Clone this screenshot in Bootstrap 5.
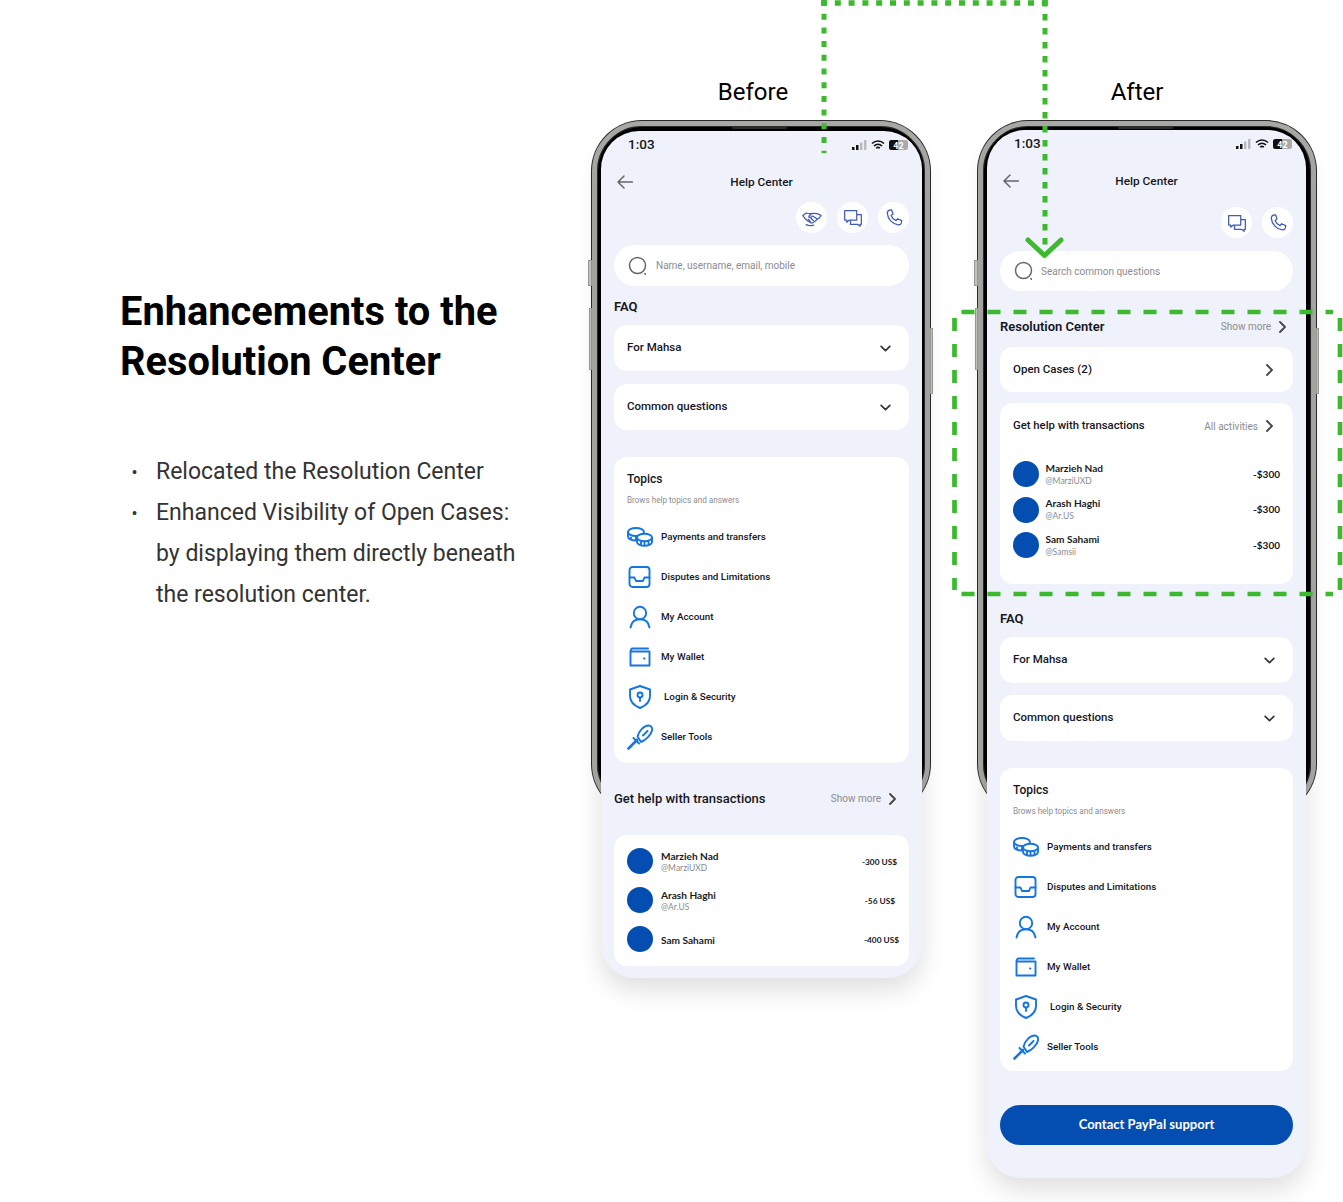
<!DOCTYPE html>
<html lang="en">
<head>
    <meta charset="UTF-8">
    <title>Enhancements to the Resolution Center</title>
    <link href="https://cdn.jsdelivr.net/npm/bootstrap@5.3.3/dist/css/bootstrap.min.css" rel="stylesheet">
    <style>
        body { background: #fff; font-family: Roboto, "Liberation Sans", sans-serif; }
        .sheet { width: 1343px; height: 1202px; overflow: hidden; }
        .intro { width: 591px; padding: 287px 0 0 120px; flex: none; }
        .intro h1 { font-size: 39.800px; line-height: 50px; font-weight: 700; color: #000; margin: 0; }
        .intro ul { margin: 64px 0 0; padding-left: 36px; font-size: 23px; line-height: 41px; font-weight: 400; color: #333; }
        .intro li::marker { content: "•\2003"; font-size: 18px; }
        .phone-col { width: 340px; flex: none; padding-top: 77px; }
        .phone-col.after-col { margin-left: 46px; }
        .phone-label { font-size: 24px; line-height: 30px; height: 43px; text-align: center; color: #000; padding-right: 16px; }
        .after-col .phone-label { padding-right: 20px; }
        .phone { position: relative; padding: 11px 9px 0 10px; }
        .after-col .phone { padding: 10px 11px 0 10px; }
        .frame { position: absolute; left: 1px; top: 1px; width: 338px; height: 693px; background: #000; border: 5px solid #a9aaa5; border-radius: 50px; box-shadow: 0 0 0 1px #2b2b2b, inset 0 0 0 1px #2b2b2b; }
        .frame::before { content: ""; position: absolute; left: 135px; top: 0; width: 55px; height: 3px; border-radius: 2px; background: #2c2c2c; }
        .side-btn { position: absolute; background: #c6c7c2; border: 1px solid #9a9a96; }
        .sb-1 { left: -3px; top: 140px; width: 4px; height: 26px; }
        .sb-2 { left: -2px; top: 188px; width: 3px; height: 62px; }
        .sb-3 { right: -2px; top: 208px; width: 3px; height: 66px; }
        .screen { position: relative; background: #eff2fa; border-radius: 38px 38px 34px 34px; box-shadow: 0 12px 26px rgba(0, 0, 0, .13); color: #16161e; }
        .status-row { height: 33px; padding: 4px 14px 0 27px; font-size: 13.500px; line-height: 18px; font-weight: 500; }
        .nav-row { height: 36px; padding: 0 16px; }
        .nav-row svg { width: 16px; height: 14px; stroke: #666; flex: none; }
        .nav-title { font-size: 11.800px; font-weight: 500; text-align: center; flex: 1 1 auto; padding: 1px 16px 0 0; }
        .act-row { padding: 0 13px; gap: 10px; margin-top: 2px; }
        .after-col .act-row { margin-top: 8px; }
        .act-btn { width: 31px; height: 31px; border-radius: 50%; background: #fff; }
        .act-btn svg { width: 20px; height: 20px; stroke: #4259b5; }
        .body-pad { padding: 0 13px; }
        .search-box { height: 41px; margin-top: 12px; background: #fff; border-radius: 21px; padding-left: 14px; gap: 8px; font-size: 10px; color: #8b8b8f; }
        .after-col .search-box { height: 40px; margin-top: 13px; gap: 7px; }
        .search-box svg { width: 20px; height: 20px; stroke: #666; }
        .sec-title { font-size: 13px; line-height: 18px; font-weight: 600; }
        .faq-title { margin-top: 12px; }
        .after-col .faq-title { margin-top: 26px; }
        .fold-row { height: 46px; margin-top: 13px; padding: 0 18px 0 13px; border-radius: 13px; font-size: 11.500px; font-weight: 500; }
        .fold-row.first { margin-top: 9px; }
        .after-col .fold-row { margin-top: 12px; }
        .after-col .fold-row.first { margin-top: 9px; }
        .fold-row svg { width: 11px; height: 7px; stroke: #333; stroke-width: 1.900; }
        .topic-card { margin-top: 27px; padding: 13px 0 6px 13px; border-radius: 13px; }
        .after-col .topic-card { padding-bottom: 4px; }
        .topic-head { font-size: 12px; line-height: 18px; font-weight: 500; }
        .topic-sub { font-size: 8.150px; line-height: 12px; margin: 6px 0 11px; color: #8b8b8f; }
        .after-col .topic-sub { margin-bottom: 10px; }
        .topic-row { height: 40px; gap: 8px; font-size: 9.850px; font-weight: 500; }
        .topic-row svg { width: 26px; height: 26px; stroke: #1575e2; stroke-width: 1.900; flex: none; }
        .topic-row .shift { margin-left: 3px; }
        .more-link { font-size: 10px; font-weight: 400; color: #8b8b8f; gap: 8px; }
        .more-link svg, .open-row svg { width: 7px; height: 12px; stroke: #444; stroke-width: 1.800; }
        .help-head { margin-top: 27px; padding-right: 13px; font-weight: 500; }
        .res-head { margin-top: 27px; padding-right: 7px; }
        .open-row { height: 45px; margin-top: 11px; padding: 0 20px 0 13px; border-radius: 13px; font-size: 11.500px; font-weight: 500; }
        .help-card { margin-top: 27px; padding: 13px 10px 14px 13px; border-radius: 13px; }
        .help-card.wide { margin-top: 11px; padding: 14px 13px 26px; }
        .help-top { height: 18px; font-size: 11.300px; font-weight: 500; padding-right: 7px; margin-bottom: 26px; }
        .person { font-family: Lato, "Liberation Sans", sans-serif; gap: 8px; margin-bottom: 13px; height: 26px; }
        .person:last-child { margin-bottom: 0; }
        .person > div:not(.avatar) { padding-top: 2px; }
        .wide .person { gap: 6.500px; margin-bottom: 9.500px; }
        .wide .person:last-child { margin-bottom: 0; }
        .wide .person > div:not(.avatar) { padding-top: 0; }
        .wide .p-tag { margin-top: 1px; }
        .avatar { width: 26px; height: 26px; border-radius: 50%; background: #034eb0; flex: none; }
        .p-name { font-size: 10.100px; line-height: 12px; font-weight: 700; color: #1b1b22; }
        .p-tag { font-size: 8.500px; line-height: 12px; color: #8b8b8f; }
        .p-sum { font-size: 8.300px; font-weight: 700; margin-left: auto; }
        .wide .p-sum { font-size: 10px; }
        .sum-a { margin-right: 2px; }
        .sum-b { margin-right: 4px; }
        .pay-btn { margin-top: 34px; height: 40px; background: #034eb0; border: 0; border-radius: 20px; font-family: Lato, "Liberation Sans", sans-serif; font-size: 13px; font-weight: 700; color: #fff; }
        .bottom-pad-a { height: 12px; }
        .bottom-pad-b { height: 33px; }
        .marks { position: absolute; left: 0; top: 0; pointer-events: none; }
        svg.line-ico { fill: none; stroke-linecap: round; stroke-linejoin: round; }
        .nav-row svg.line-ico, .act-btn svg.line-ico, .search-box svg.line-ico { stroke-width: 1.500; }
    </style>
</head>
<body>

<svg width="0" height="0" class="d-block position-absolute">
    <defs>
        <symbol id="i-back" viewBox="0 0 16 14"><path d="M15.500 7H1M7 1 1 7l6 6"/></symbol>
        <symbol id="i-hand" viewBox="0 0 24 24"><path d="M1 9 5 6c3 1 4 1 7 .5 2-.5 4 0 7 .5l4 2M1 9c1.500 3 4 5 6 6.500l3 2c1.500 1 3 .5 4-.5l4.500-3.500c1.500-1 3.500-2.500 4.500-4.500M12 6.500 8.500 9.500c-1 1 .5 2.500 2 1.500l2.500-1.500 5.500 4M7.500 13.500l2.500 2.500M10.500 12l3 3M5 20c3 1.500 6 1.500 9 .5"/></symbol>
        <symbol id="i-chat" viewBox="0 0 24 24"><path d="M2 3h14.500v11.500H7.500L4.500 17v-2.500H2zM16.500 8H22v11.500h-1.500V22l-3-2.500H9V14.500"/></symbol>
        <symbol id="i-phone" viewBox="0 0 24 24"><path d="M6.500 2.500 9 2.200l1.800 5-2.300 1.700c1 2.800 3.200 5 6 6.200l1.800-2.200 5 2.200-.5 2.800c-.4 1.500-2 2.600-3.500 2.400C10.500 19.500 4.500 13.500 4 6.500c-.1-1.800 1-3.500 2.500-4z"/></symbol>
        <symbol id="i-search" viewBox="0 0 20 20"><circle cx="9.500" cy="9.500" r="8"/><path d="m16.800 17.500.6.600"/></symbol>
        <symbol id="i-coins" viewBox="0 0 26 26"><ellipse cx="9" cy="8" rx="8" ry="4"/><path d="M1 8v4.500c0 2.200 3.600 4 8 4M4 15.500v-2M9 16.500v-3"/><ellipse cx="17.500" cy="13.500" rx="7.500" ry="3.700" fill="#fff"/><path d="M10 13.500v4.500c0 2.100 3.400 3.800 7.500 3.800s7.500-1.700 7.500-3.800v-4.500M14 21v-3M17.500 21.500v-3M21.500 21v-3"/></symbol>
        <symbol id="i-tray" viewBox="0 0 26 26"><rect x="2.500" y="3" width="20" height="20" rx="3"/><path d="M2.500 13.500h5l1.500 3.500h7l1.500-3.500h5"/></symbol>
        <symbol id="i-user" viewBox="0 0 26 26"><circle cx="13" cy="9" r="6.200"/><path d="M3.500 23.500c.8-5.200 4.500-8.300 9.500-8.300s8.700 3.100 9.500 8.300"/></symbol>
        <symbol id="i-wallet" viewBox="0 0 26 26"><path d="M5.500 4.500H21M3.500 7.500c0-1.500.8-3 2-3M3.500 7.500h19v14h-19zM17 14.500h.5"/></symbol>
        <symbol id="i-shield" viewBox="0 0 26 26"><path d="M13 2 23 5.500V12c0 6-4.500 9.800-10 12C7.500 21.800 3 18 3 12V5.500z"/><circle cx="13" cy="11" r="2.500"/><path d="M13 13.500v3.500"/></symbol>
        <symbol id="i-tool" viewBox="0 0 26 26"><path d="M1.500 24.500l8.500-8.500" stroke-width="2.600"/><path d="M6.500 14l5.500 5.500M10.500 12.500C12 7 17 1.500 21.500 1.500c3 0 4 2.500 3.500 5C24 11 19 16 14 18zM16 11.500l4.500-4.500"/></symbol>
        <symbol id="i-chev" viewBox="0 0 7 12"><path d="m1 1 5 5-5 5"/></symbol>
        <symbol id="i-down" viewBox="0 0 12 8"><path d="m1 1.500 5 5 5-5"/></symbol>
    </defs>
</svg>

<div class="sheet position-relative d-flex">
    <!-- Left copy -->
    <div class="intro">
        <h1>Enhancements to the<br>Resolution Center</h1>
        <ul>
            <li>Relocated the Resolution Center</li>
            <li>Enhanced Visibility of Open Cases:<br>by displaying them directly beneath<br>the resolution center.</li>
        </ul>
    </div>

    <!-- Before -->
    <div class="phone-col">
        <div class="phone-label">Before</div>
        <div class="phone">
            <div class="frame"></div>
            <div class="side-btn sb-1"></div>
            <div class="side-btn sb-2"></div>
            <div class="side-btn sb-3"></div>
            <div class="screen">
                <div class="status-row d-flex justify-content-between">
                    <span>1:03</span>
                    <svg width="56" height="12" viewBox="0 0 56 12" class="mt-1">
                        <rect x="0" y="8" width="2.500" height="3" fill="#111"/><rect x="4" y="6" width="2.500" height="5" fill="#111"/><rect x="8" y="3.500" width="2.500" height="7.500" fill="#bbb"/><rect x="12" y="1" width="2.500" height="10" fill="#bbb"/>
                        <path d="M20 4.500c3.500-3.300 8.500-3.300 12 0M22 7c2.300-2.200 5.700-2.200 8 0M24.200 9.200c1-1 2.600-1 3.600 0" fill="none" stroke="#111" stroke-width="1.600"/>
                        <rect x="37" y="1" width="19" height="10" rx="2.500" fill="#aaa"/><path d="M39.500 1H46v10h-6.500A2.500 2.500 0 0 1 37 8.500v-5A2.500 2.500 0 0 1 39.500 1z" fill="#111"/>
                        <text x="46.500" y="9.500" text-anchor="middle" font-size="9" font-weight="700" fill="#fff" font-family="Roboto">42</text>
                    </svg>
                </div>
                <div class="nav-row d-flex align-items-center">
                    <svg class="line-ico"><use href="#i-back"/></svg>
                    <div class="nav-title">Help Center</div>
                </div>
                <div class="act-row d-flex justify-content-end">
                    <div class="act-btn d-flex align-items-center justify-content-center"><svg class="line-ico"><use href="#i-hand"/></svg></div>
                    <div class="act-btn d-flex align-items-center justify-content-center"><svg class="line-ico"><use href="#i-chat"/></svg></div>
                    <div class="act-btn d-flex align-items-center justify-content-center"><svg class="line-ico"><use href="#i-phone"/></svg></div>
                </div>
                <div class="body-pad">
                    <div class="search-box d-flex align-items-center"><svg class="line-ico"><use href="#i-search"/></svg><span>Name, username, email, mobile</span></div>
                    <div class="sec-title faq-title">FAQ</div>
                    <div class="card border-0 flex-row justify-content-between align-items-center fold-row first"><span>For Mahsa</span><svg class="line-ico"><use href="#i-down"/></svg></div>
                    <div class="card border-0 flex-row justify-content-between align-items-center fold-row"><span>Common questions</span><svg class="line-ico"><use href="#i-down"/></svg></div>
                    <div class="card border-0 topic-card">
                        <div class="topic-head">Topics</div>
                        <div class="topic-sub">Brows help topics and answers</div>
                        <div class="topic-row d-flex align-items-center"><svg class="line-ico"><use href="#i-coins"/></svg>Payments and transfers</div>
                        <div class="topic-row d-flex align-items-center"><svg class="line-ico"><use href="#i-tray"/></svg>Disputes and Limitations</div>
                        <div class="topic-row d-flex align-items-center"><svg class="line-ico"><use href="#i-user"/></svg>My Account</div>
                        <div class="topic-row d-flex align-items-center"><svg class="line-ico"><use href="#i-wallet"/></svg>My Wallet</div>
                        <div class="topic-row d-flex align-items-center"><svg class="line-ico"><use href="#i-shield"/></svg><span class="shift">Login &amp; Security</span></div>
                        <div class="topic-row d-flex align-items-center"><svg class="line-ico"><use href="#i-tool"/></svg>Seller Tools</div>
                    </div>
                    <div class="sec-title help-head d-flex justify-content-between align-items-center">
                        <span>Get help with transactions</span>
                        <span class="more-link d-flex align-items-center">Show more <svg class="line-ico"><use href="#i-chev"/></svg></span>
                    </div>
                    <div class="card border-0 help-card">
                        <div class="person d-flex align-items-center"><div class="avatar"></div><div><div class="p-name">Marzieh Nad</div><div class="p-tag">@MarziUXD</div></div><div class="p-sum sum-a">-300 US$</div></div>
                        <div class="person d-flex align-items-center"><div class="avatar"></div><div><div class="p-name">Arash Haghi</div><div class="p-tag">@Ar.US</div></div><div class="p-sum sum-b">-56 US$</div></div>
                        <div class="person d-flex align-items-center"><div class="avatar"></div><div class="p-name">Sam Sahami</div><div class="p-sum">-400 US$</div></div>
                    </div>
                    <div class="bottom-pad-a"></div>
                </div>
            </div>
        </div>
    </div>

    <!-- After -->
    <div class="phone-col after-col">
        <div class="phone-label">After</div>
        <div class="phone">
            <div class="frame"></div>
            <div class="side-btn sb-1"></div>
            <div class="side-btn sb-2"></div>
            <div class="side-btn sb-3"></div>
            <div class="screen">
                <div class="status-row d-flex justify-content-between">
                    <span>1:03</span>
                    <svg width="56" height="12" viewBox="0 0 56 12" class="mt-1">
                        <rect x="0" y="8" width="2.500" height="3" fill="#111"/><rect x="4" y="6" width="2.500" height="5" fill="#111"/><rect x="8" y="3.500" width="2.500" height="7.500" fill="#bbb"/><rect x="12" y="1" width="2.500" height="10" fill="#bbb"/>
                        <path d="M20 4.500c3.500-3.300 8.500-3.300 12 0M22 7c2.300-2.200 5.700-2.200 8 0M24.200 9.200c1-1 2.600-1 3.600 0" fill="none" stroke="#111" stroke-width="1.600"/>
                        <rect x="37" y="1" width="19" height="10" rx="2.500" fill="#aaa"/><path d="M39.500 1H46v10h-6.500A2.500 2.500 0 0 1 37 8.500v-5A2.500 2.500 0 0 1 39.500 1z" fill="#111"/>
                        <text x="46.500" y="9.500" text-anchor="middle" font-size="9" font-weight="700" fill="#fff" font-family="Roboto">42</text>
                    </svg>
                </div>
                <div class="nav-row d-flex align-items-center">
                    <svg class="line-ico"><use href="#i-back"/></svg>
                    <div class="nav-title">Help Center</div>
                </div>
                <div class="act-row d-flex justify-content-end">
                    <div class="act-btn d-flex align-items-center justify-content-center"><svg class="line-ico"><use href="#i-chat"/></svg></div>
                    <div class="act-btn d-flex align-items-center justify-content-center"><svg class="line-ico"><use href="#i-phone"/></svg></div>
                </div>
                <div class="body-pad">
                    <div class="search-box d-flex align-items-center"><svg class="line-ico"><use href="#i-search"/></svg><span>Search common questions</span></div>
                    <div class="sec-title res-head d-flex justify-content-between align-items-center">
                        <span>Resolution Center</span>
                        <span class="more-link d-flex align-items-center">Show more <svg class="line-ico"><use href="#i-chev"/></svg></span>
                    </div>
                    <div class="card border-0 flex-row justify-content-between align-items-center open-row"><span>Open Cases (2)</span><svg class="line-ico"><use href="#i-chev"/></svg></div>
                    <div class="card border-0 help-card wide">
                        <div class="help-top d-flex justify-content-between align-items-center">
                            <span>Get help with transactions</span>
                            <span class="more-link d-flex align-items-center">All activities <svg class="line-ico"><use href="#i-chev"/></svg></span>
                        </div>
                        <div class="person d-flex align-items-center"><div class="avatar"></div><div><div class="p-name">Marzieh Nad</div><div class="p-tag">@MarziUXD</div></div><div class="p-sum">-$300</div></div>
                        <div class="person d-flex align-items-center"><div class="avatar"></div><div><div class="p-name">Arash Haghi</div><div class="p-tag">@Ar.US</div></div><div class="p-sum">-$300</div></div>
                        <div class="person d-flex align-items-center"><div class="avatar"></div><div><div class="p-name">Sam Sahami</div><div class="p-tag">@Samsii</div></div><div class="p-sum">-$300</div></div>
                    </div>
                    <div class="sec-title faq-title">FAQ</div>
                    <div class="card border-0 flex-row justify-content-between align-items-center fold-row first"><span>For Mahsa</span><svg class="line-ico"><use href="#i-down"/></svg></div>
                    <div class="card border-0 flex-row justify-content-between align-items-center fold-row"><span>Common questions</span><svg class="line-ico"><use href="#i-down"/></svg></div>
                    <div class="card border-0 topic-card">
                        <div class="topic-head">Topics</div>
                        <div class="topic-sub">Brows help topics and answers</div>
                        <div class="topic-row d-flex align-items-center"><svg class="line-ico"><use href="#i-coins"/></svg>Payments and transfers</div>
                        <div class="topic-row d-flex align-items-center"><svg class="line-ico"><use href="#i-tray"/></svg>Disputes and Limitations</div>
                        <div class="topic-row d-flex align-items-center"><svg class="line-ico"><use href="#i-user"/></svg>My Account</div>
                        <div class="topic-row d-flex align-items-center"><svg class="line-ico"><use href="#i-wallet"/></svg>My Wallet</div>
                        <div class="topic-row d-flex align-items-center"><svg class="line-ico"><use href="#i-shield"/></svg><span class="shift">Login &amp; Security</span></div>
                        <div class="topic-row d-flex align-items-center"><svg class="line-ico"><use href="#i-tool"/></svg>Seller Tools</div>
                    </div>
                    <button type="button" class="btn w-100 d-block pay-btn">Contact PayPal support</button>
                    <div class="bottom-pad-b"></div>
                </div>
            </div>
        </div>
    </div>

    <!-- Green annotations drawn over both phones -->
    <svg class="marks" width="1343" height="1202" fill="none" stroke="#3cb92e">
        <path d="M821 3H1048" stroke-width="5.500" stroke-dasharray="6 7.800"/>
        <path d="M824 0V153" stroke-width="5" stroke-dasharray="6 7.700"/>
        <path d="M1045 0V246" stroke-width="5" stroke-dasharray="6.500 7.500"/>
        <path d="M1028 240 1044.500 255.500 1061 240" stroke-width="5" stroke-linecap="round" stroke-linejoin="round"/>
        <path d="M961.500 312H1333M961.500 594H1333" stroke-width="4.700" stroke-dasharray="13 13"/>
        <path d="M954.500 318V590M1340 318V590" stroke-width="4.700" stroke-dasharray="13 13"/>
    </svg>
</div>

<script src="https://cdn.jsdelivr.net/npm/bootstrap@5.3.3/dist/js/bootstrap.bundle.min.js"></script>
</body>
</html>
